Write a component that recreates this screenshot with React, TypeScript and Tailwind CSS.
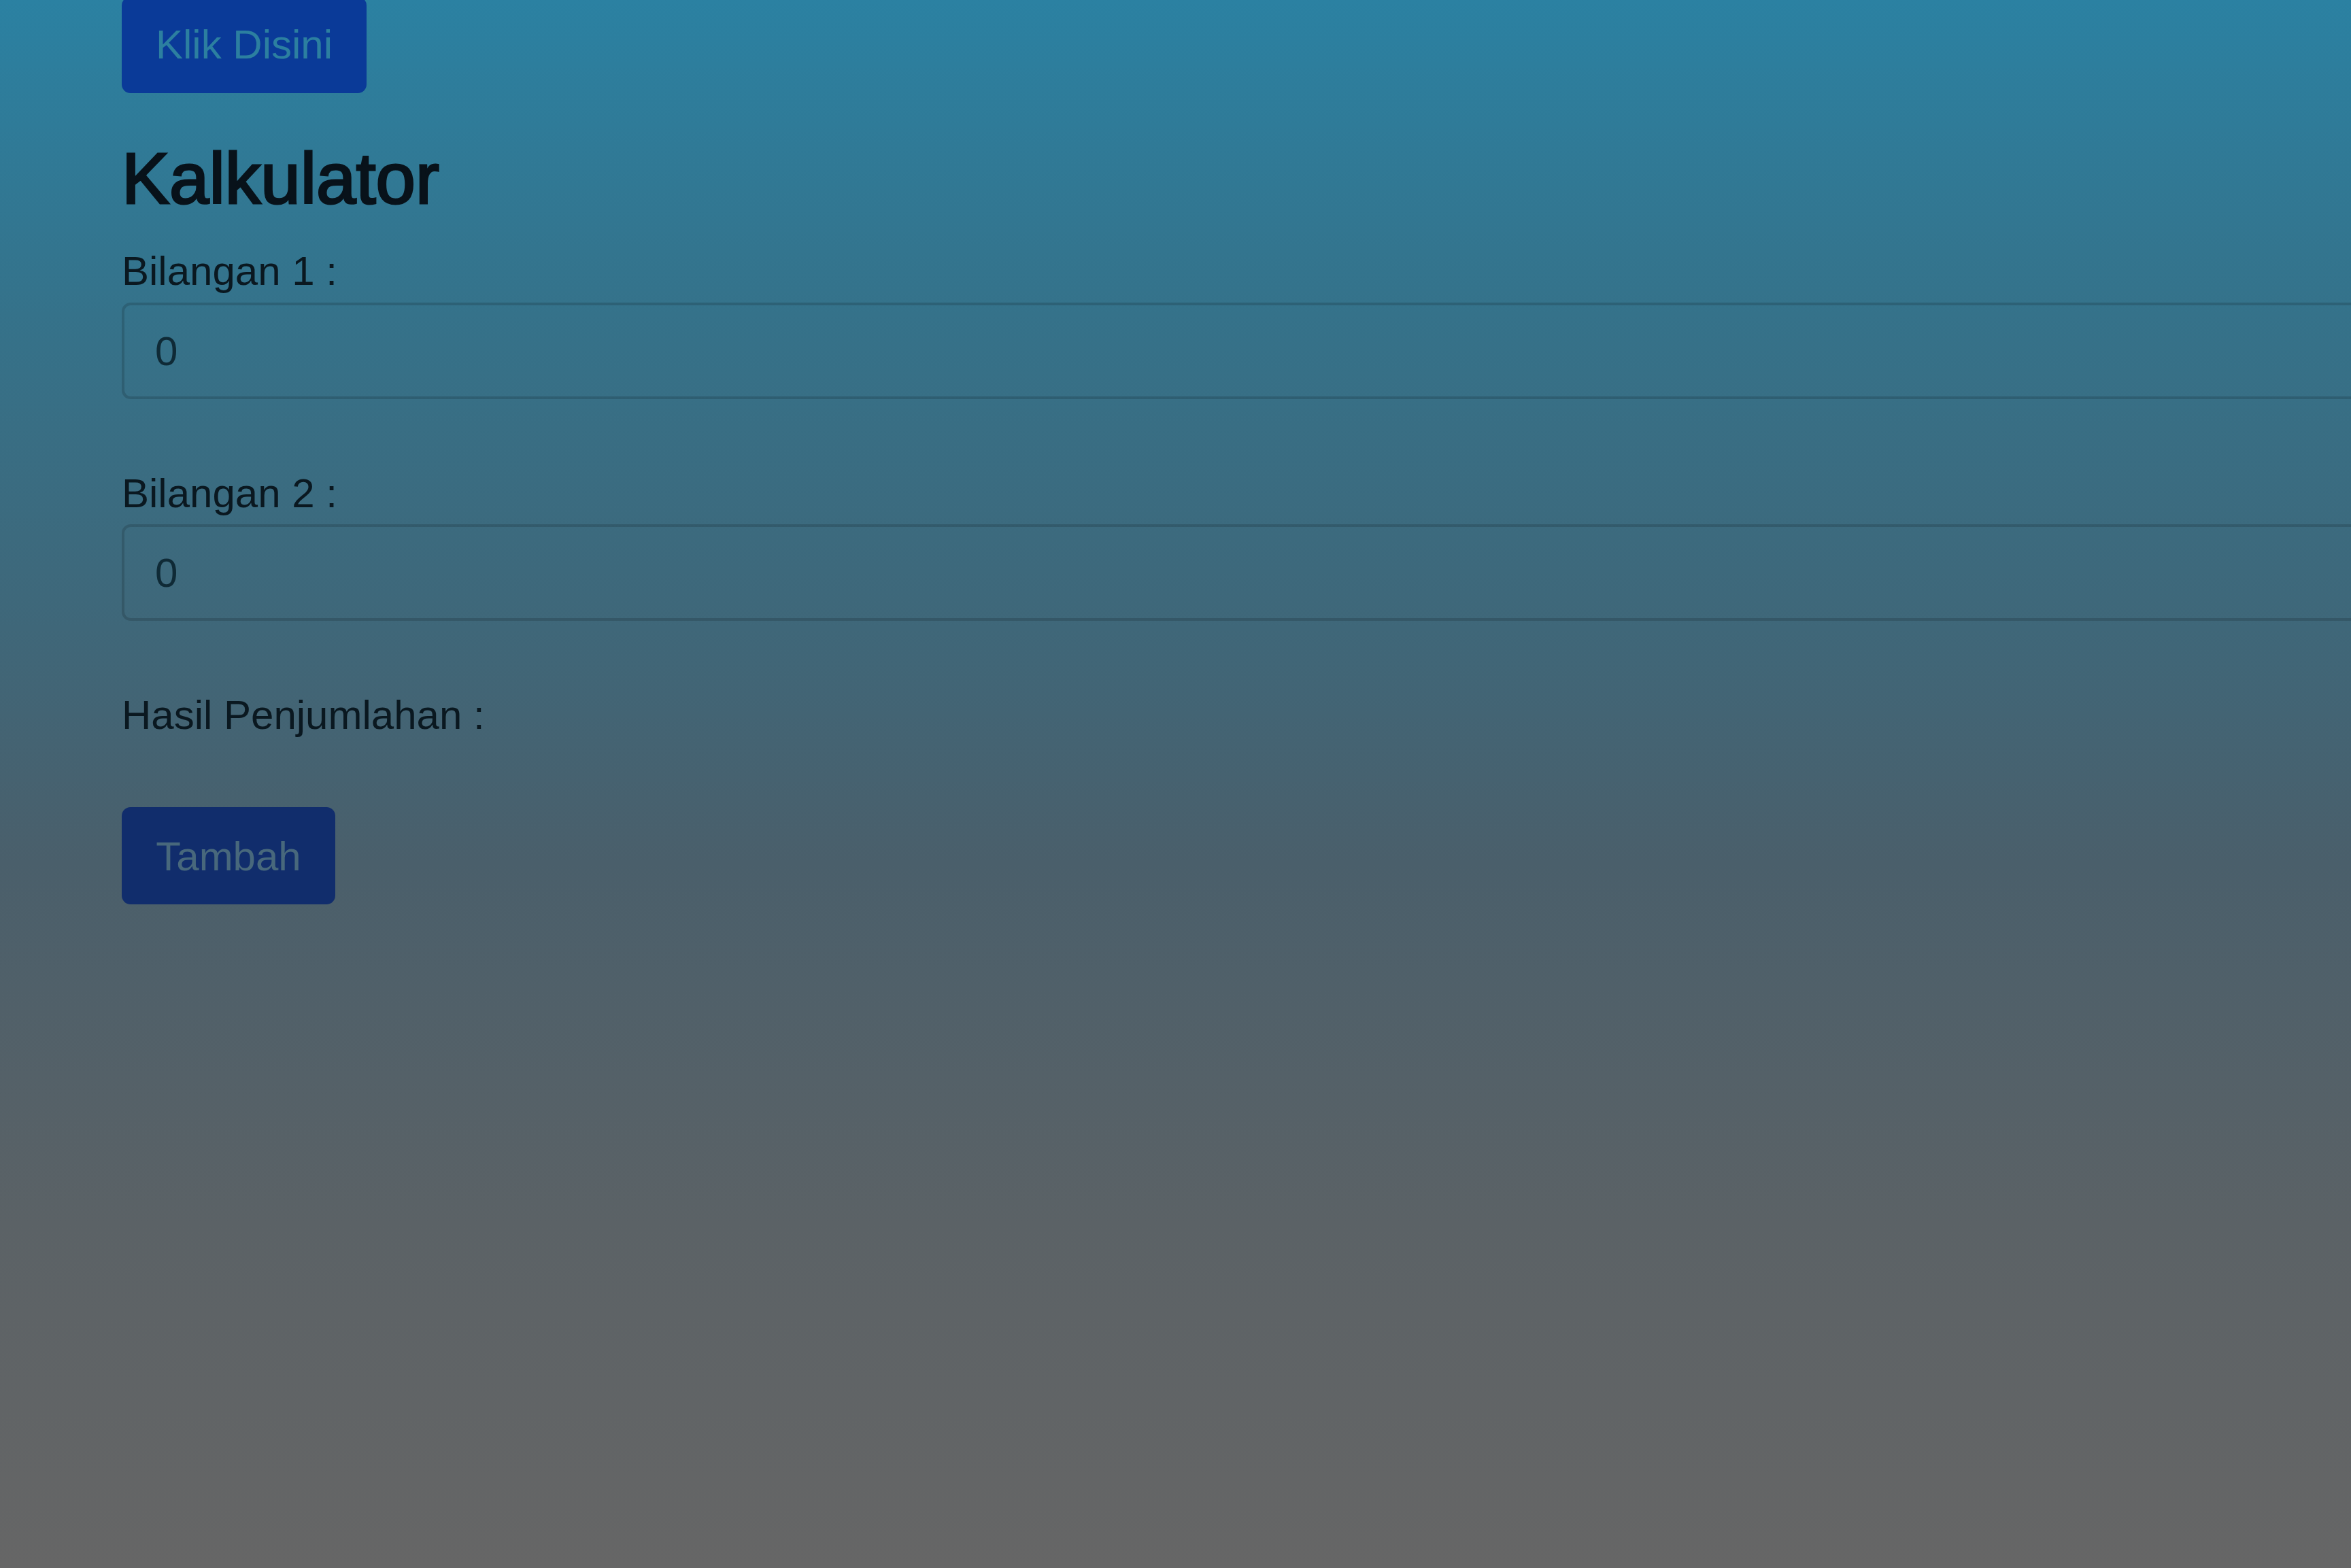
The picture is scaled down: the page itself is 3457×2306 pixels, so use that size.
import { useState } from "react";

export default function App() {
  const [a, setA] = useState("0");
  const [b, setB] = useState("0");
  const [hasil, setHasil] = useState<number | null>(null);

  return (
    <div className="h-[2306px] w-full overflow-hidden bg-[linear-gradient(180deg,#2b81a2_0%,#35728a_20%,#3f6779_40%,#4a5f6b_55%,#5b6266_78%,#666666_100%)] font-['Liberation_Sans',Arial,sans-serif] text-[60px] leading-[90px]">
      <div className="flex flex-col items-start pl-[179px]">
        {/* tombol atas, terpotong sedikit di tepi atas */}
        <button
          type="button"
          className="-mt-[5px] h-[142px] w-[360px] rounded-[13px] bg-[#0a3a98] text-[#2c7fa0]"
        >
          Klik Disini
        </button>

        <h1 className="mt-[63px] text-[105px] leading-[126px] text-[#08121a] [-webkit-text-stroke:3px_#08121a]">
          Kalkulator
        </h1>

        <label className="mt-[28px] block text-[#0a1820]">Bilangan 1 :</label>
        <input
          value={a}
          onChange={(e) => setA(e.target.value)}
          className="mt-px h-[142px] w-[3400px] rounded-[13px] border-[4px] border-black/15 bg-transparent px-[45px] text-[#0f2a36] outline-none"
        />

        <label className="mt-[94px] block text-[#0a1820]">Bilangan 2 :</label>
        <input
          value={b}
          onChange={(e) => setB(e.target.value)}
          className="h-[142px] w-[3400px] rounded-[13px] border-[4px] border-black/15 bg-transparent px-[45px] text-[#0f2a36] outline-none"
        />

        <p className="mt-[94px] text-[#0a1820]">Hasil Penjumlahan : {hasil ?? ""}</p>

        <button
          type="button"
          onClick={() => setHasil(Number(a) + Number(b))}
          className="mt-[90px] h-[143px] w-[314px] rounded-[13px] bg-[#112d6c] pt-[3px] text-[#48687c]"
        >
          Tambah
        </button>
      </div>
    </div>
  );
}
